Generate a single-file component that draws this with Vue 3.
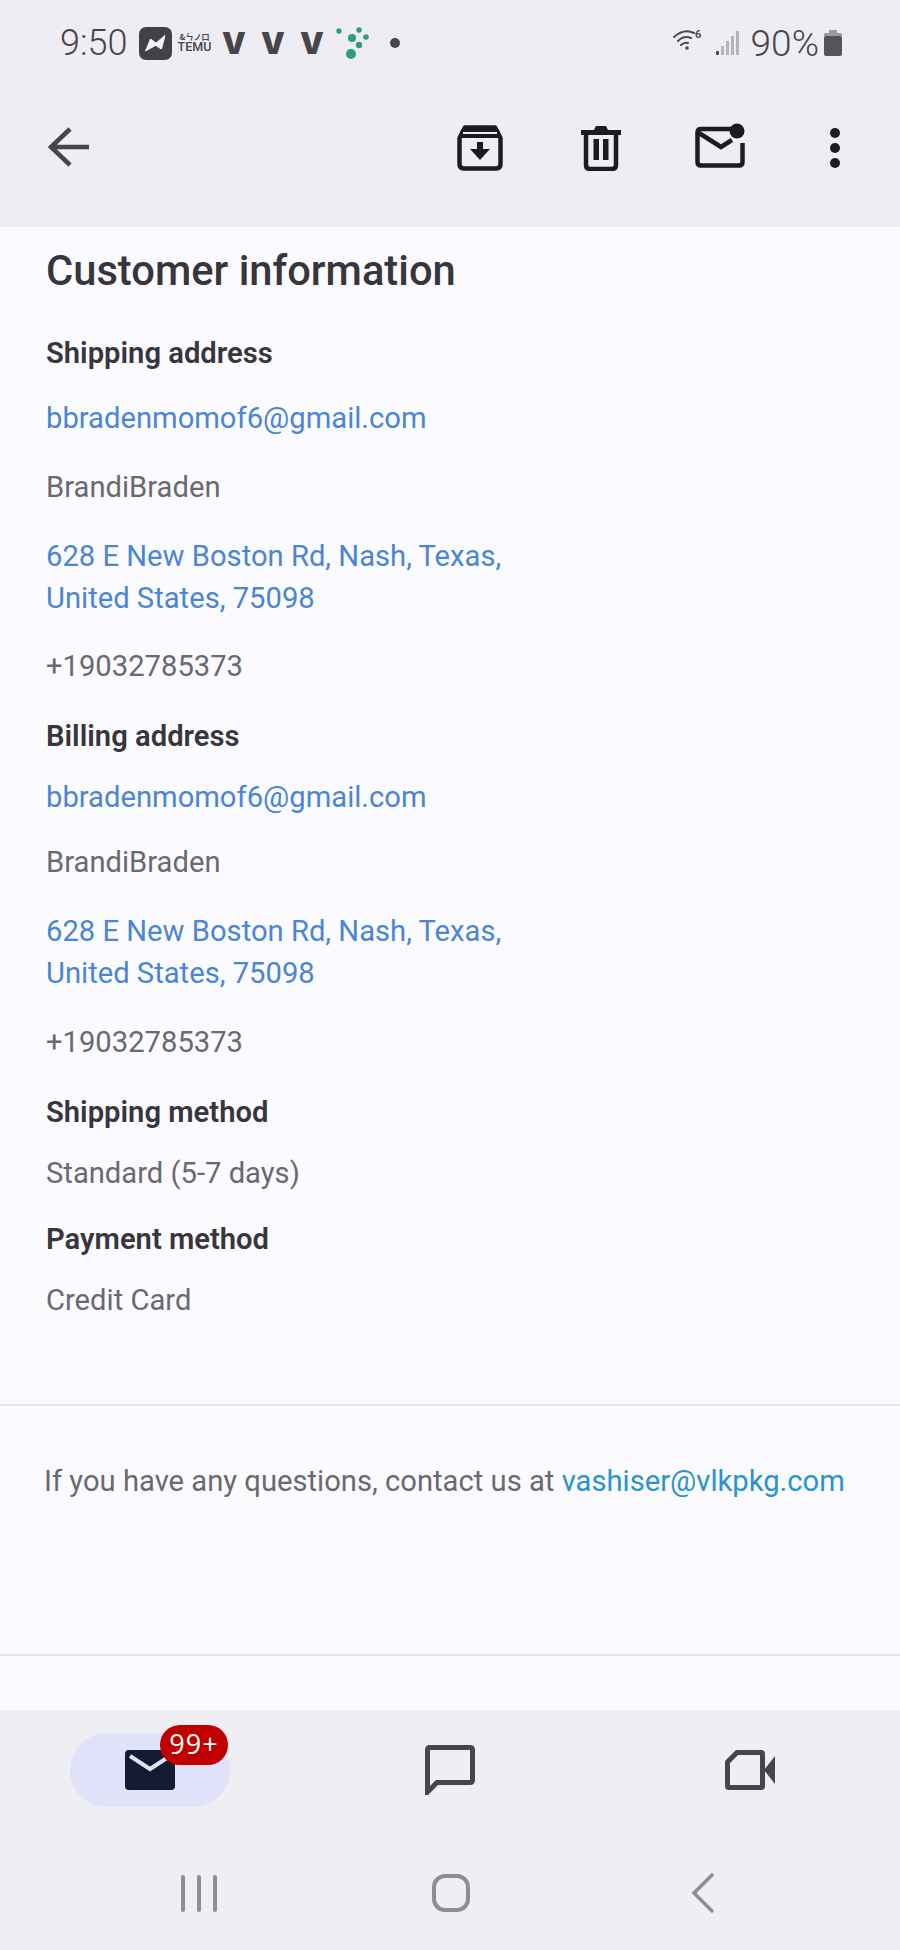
<template>
  <div class="phone">
    <header class="top">
      <div class="status">
        <span class="time">9:50</span>
        <svg class="st-app" viewBox="0 0 33 33">
          <rect width="33" height="33" rx="7" fill="#434147" />
          <path d="M6.500 24 L11.500 12 L17 16 L26 8.500 L22.500 22 L16.500 18.500 Z" fill="#f4f3f7" stroke="#f4f3f7" stroke-width="1" stroke-linejoin="round" />
        </svg>
        <div class="temu">
          <span class="temu-top">&amp;ㄣノ口</span>
          <span class="temu-name">TEMU</span>
        </div>
        <span class="vee" v-for="n in 3" :key="n">V</span>
        <svg class="st-dots" viewBox="0 0 34 34">
          <circle cx="4" cy="5" r="2.700" fill="#2f9c7c" />
          <circle cx="17" cy="12" r="4" fill="#2f9c7c" />
          <circle cx="24" cy="4" r="2.700" fill="#2f9c7c" />
          <circle cx="31" cy="11" r="2.800" fill="#2f9c7c" />
          <circle cx="24" cy="19" r="3.200" fill="#2f9c7c" />
          <circle cx="16" cy="28" r="5" fill="#2f9c7c" />
        </svg>
        <span class="st-dot"></span>
        <span class="spacer"></span>
        <svg class="st-wifi" viewBox="0 0 30 24">
          <path d="M1 9 Q11 0 21 5 M5 13 Q11 7 18 10 M8 17 Q11 14 15 15" fill="none" stroke="#4a484e" stroke-width="2" stroke-linecap="round" />
          <circle cx="14" cy="20" r="1.800" fill="#4a484e" />
          <text x="22" y="10" class="wifi-six">6</text>
        </svg>
        <svg class="st-signal" viewBox="0 0 24 24">
          <rect x="1" y="20" width="3" height="4" rx="1" fill="#48464c" />
          <rect x="6" y="15" width="3" height="9" fill="#b5b4ba" />
          <rect x="11" y="10" width="3" height="14" fill="#b5b4ba" />
          <rect x="16" y="5" width="3" height="19" fill="#b5b4ba" />
          <rect x="21" y="0" width="3" height="24" fill="#b5b4ba" />
        </svg>
        <span class="batt-text">90%</span>
        <svg class="st-batt" viewBox="0 0 18 26">
          <rect x="5" y="0" width="8" height="4" fill="#9b9a9f" />
          <rect x="0" y="3" width="18" height="4" rx="1.500" fill="#9b9a9f" />
          <rect x="0" y="6" width="18" height="20" rx="2" fill="#56545a" />
        </svg>
      </div>
      <div class="actions">
        <svg class="ic-back" viewBox="0 0 42 42">
          <path d="M41 21 H4 M22 3 L3 21 L22 39" fill="none" stroke="#47454b" stroke-width="4.500" />
        </svg>
        <svg class="ic-archive" viewBox="0 0 46 46">
          <path d="M2.500 13 L2.500 39 Q2.500 43.500 7 43.500 H39 Q43.500 43.500 43.500 39 V13 L38 2.500 H8 Z" fill="none" stroke="#1c1b1f" stroke-width="4.500" stroke-linejoin="round" />
          <path d="M3 9 Q3 3 9 3 H37 Q43 3 43 9 V13 H3 Z" fill="#1c1b1f" />
          <path d="M6 7 Q7 7 9 7 H37 Q39 7 40 7 V9 H6 Z" fill="#eeedf3" />
          <path d="M20 17 H26 V24 H33 L23 35 L13 24 H20 Z" fill="#1c1b1f" />
        </svg>
        <svg class="ic-trash" viewBox="0 0 40 46">
          <path d="M0 5 H13 L15 1 H25 L27 5 H40 V10 H0 Z" fill="#1c1b1f" />
          <path d="M5 8 V40 Q5 44 9 44 H31 Q35 44 35 40 V8" fill="none" stroke="#1c1b1f" stroke-width="4.500" />
          <rect x="12.500" y="14" width="5.500" height="21" fill="#1c1b1f" />
          <rect x="22" y="14" width="5.500" height="21" fill="#1c1b1f" />
        </svg>
        <svg class="ic-unread" viewBox="0 0 52 46">
          <path d="M36 6 H6 Q2.500 6 2.500 9.500 V39 Q2.500 42.500 6 42.500 H44 Q47.500 42.500 47.500 39 V20" fill="none" stroke="#1c1b1f" stroke-width="4.500" />
          <path d="M4 10 L26 24 L37 17" fill="none" stroke="#1c1b1f" stroke-width="4.500" />
          <circle cx="42" cy="8" r="7.500" fill="#1c1b1f" />
        </svg>
        <div class="ic-more">
          <span></span>
          <span></span>
          <span></span>
        </div>
      </div>
    </header>

    <main class="body">
      <section class="info">
        <h1>Customer information</h1>
        <div v-for="(block, i) in addresses" :key="block.title" class="addr-block" :class="{ tight: i === 1 }">
          <h2>{{ block.title }}</h2>
          <p class="link email">{{ block.email }}</p>
          <p class="muted name">{{ block.name }}</p>
          <p class="link addr">628 E New Boston Rd, Nash, Texas,<br />United States, 75098</p>
          <p class="muted phone-no">{{ block.phone }}</p>
        </div>
        <h2>Shipping method</h2>
        <p class="muted method">Standard (5-7 days)</p>
        <h2 class="pay">Payment method</h2>
        <p class="muted method">Credit Card</p>
      </section>
      <section class="contact">
        If you have any questions, contact us at <span class="contact-link">vashiser@vlkpkg.com</span>
      </section>
    </main>

    <footer class="bottom">
      <nav class="tabs">
        <div class="tab">
          <div class="pill">
            <svg class="ic-mail" viewBox="0 0 50 40">
              <rect width="50" height="40" rx="4" fill="#141a33" />
              <path d="M5 6 L25 19 L45 6" fill="none" stroke="#dfe2f8" stroke-width="4" />
            </svg>
            <span class="badge">99+</span>
          </div>
        </div>
        <div class="tab">
          <svg class="ic-chat" viewBox="0 0 50 50">
            <path d="M2.500 47 V5 Q2.500 2.500 5 2.500 H45 Q47.500 2.500 47.500 5 V35 Q47.500 37.500 45 37.500 H12 Z" fill="none" stroke="#47454b" stroke-width="5" />
          </svg>
        </div>
        <div class="tab">
          <svg class="ic-video" viewBox="0 0 50 40">
            <path d="M12 2.500 H36 Q37.500 2.500 37.500 4 V36 Q37.500 37.500 36 37.500 H4 Q2.500 37.500 2.500 36 V12 Z" fill="none" stroke="#47454b" stroke-width="5" stroke-linejoin="round" />
            <path d="M39 20 L50 6 V34 Z" fill="#47454b" />
          </svg>
        </div>
      </nav>
      <div class="sysnav">
        <div class="recents">
          <span></span>
          <span></span>
          <span></span>
        </div>
        <div class="home"></div>
        <svg class="sys-back" viewBox="0 0 22 40">
          <path d="M20 2 L2 20 L20 38" fill="none" stroke="#8e8d92" stroke-width="3.500" stroke-linecap="round" />
        </svg>
      </div>
    </footer>
  </div>
</template>

<script setup>
const addresses = [
  {
    title: 'Shipping address',
    email: 'bbradenmomof6@gmail.com',
    name: 'BrandiBraden',
    phone: '+19032785373'
  },
  {
    title: 'Billing address',
    email: 'bbradenmomof6@gmail.com',
    name: 'BrandiBraden',
    phone: '+19032785373'
  }
]
</script>

<style>
html, body {
  margin: 0;
  background: #fbfaff;
}
</style>

<style scoped>
.phone {
  display: flex;
  flex-direction: column;
  width: 900px;
  height: 1950px;
  overflow: hidden;
  font-family: Roboto, "Liberation Sans", sans-serif;
  background: #fbfaff;
}

.top {
  flex: 0 0 227px;
  background: #eeedf3;
}

.status {
  display: flex;
  align-items: center;
  height: 34px;
  padding: 26px 58px 0 60px;
  color: #47454b;
}

.time {
  width: 79px;
  font-size: 36px;
  font-weight: 300;
}

.st-app {
  width: 33px;
  height: 33px;
}

.temu {
  display: flex;
  flex-direction: column;
  align-items: center;
  width: 33px;
  margin: 0 11px 0 6px;
  line-height: 1;
  color: #47454b;
}

.temu-top {
  font-family: "Noto Sans CJK SC", sans-serif;
  font-size: 8px;
  font-weight: 700;
  white-space: nowrap;
}

.temu-name {
  font-size: 12.500px;
  font-weight: 500;
}

.vee {
  width: 39px;
  font-family: Inter, sans-serif;
  font-size: 30px;
  font-weight: 900;
  line-height: 1;
}

.st-dots {
  width: 34px;
  height: 34px;
  margin-left: -4px;
}

.st-dot {
  width: 10px;
  height: 10px;
  margin-left: 21px;
  border-radius: 50%;
  background: #47454b;
}

.spacer {
  flex: 1;
}

.st-wifi {
  width: 30px;
  height: 24px;
  margin-top: -6px;
}

.wifi-six {
  font-size: 11px;
  font-weight: 700;
  fill: #4a484e;
}

.st-signal {
  width: 24px;
  height: 24px;
  margin-left: 12px;
}

.batt-text {
  margin-left: 12px;
  font-size: 37px;
  font-weight: 300;
}

.st-batt {
  width: 18px;
  height: 26px;
  margin-left: 5px;
}

.actions {
  display: flex;
  align-items: center;
  height: 46px;
  margin-top: 65px;
  padding-left: 48px;
}

.ic-back {
  width: 42px;
  height: 42px;
  margin-top: -2px;
}

.ic-archive {
  width: 46px;
  height: 46px;
  margin-left: 367px;
}

.ic-trash {
  width: 40px;
  height: 46px;
  margin-left: 78px;
}

.ic-unread {
  width: 52px;
  height: 46px;
  margin-top: -4px;
  margin-left: 74px;
}

.ic-more {
  display: flex;
  flex-direction: column;
  gap: 5px;
  margin-left: 83px;
}

.ic-more span {
  width: 10px;
  height: 10px;
  border-radius: 50%;
  background: #1c1b1f;
}

.body {
  flex: 1;
}

.info {
  height: 1179px;
  padding: 20px 46px 0;
  border-bottom: 2px solid #e6e5ea;
  box-sizing: border-box;
}

h1 {
  margin: 0;
  font-size: 41.700px;
  line-height: 48px;
  font-weight: 500;
  color: #37363c;
}

h2 {
  margin: 28px 0 0;
  font-size: 29.200px;
  line-height: 42px;
  font-weight: 600;
  color: #37363c;
}

h1 + .addr-block h2 {
  margin-top: 37px;
}

.pay {
  margin-top: 24px;
}

p {
  margin: 0;
  font-size: 29.200px;
  line-height: 42px;
}

.link {
  color: #4a86d4;
}

.muted {
  color: #6a696f;
}

.email {
  margin-top: 23px;
}

.name {
  margin-top: 27px;
}

.addr {
  margin-top: 27px;
}

.phone-no {
  margin-top: 26px;
}

.tight .email {
  margin-top: 19px;
}

.tight .name {
  margin-top: 23px;
}

.tight .phone-no {
  margin-top: 27px;
}

.method {
  margin-top: 19px;
}

.contact {
  height: 250px;
  padding: 54px 0 0 44px;
  box-sizing: border-box;
  border-bottom: 2px solid #e6e5ea;
  font-size: 29.200px;
  line-height: 42px;
  color: #6a696f;
}

.contact-link {
  color: #2a94cc;
}

.bottom {
  flex: 0 0 240px;
  background: #efeef3;
}

.tabs {
  display: grid;
  grid-template-columns: repeat(3, 300px);
  height: 120px;
}

.tab {
  display: flex;
  justify-content: center;
  align-items: center;
}

.pill {
  position: relative;
  display: flex;
  justify-content: center;
  align-items: center;
  width: 160px;
  height: 74px;
  border-radius: 37px;
  background: #dfe2f8;
}

.ic-mail {
  width: 50px;
  height: 40px;
}

.badge {
  position: absolute;
  top: -8px;
  left: 90px;
  width: 68px;
  height: 40px;
  border-radius: 20px;
  background: #c00000;
  color: #fff;
  font-family: "Open Sans", sans-serif;
  font-size: 27px;
  font-weight: 500;
  letter-spacing: 1px;
  line-height: 38px;
  text-align: center;
}

.ic-chat {
  width: 50px;
  height: 50px;
}

.ic-video {
  width: 50px;
  height: 40px;
}

.sysnav {
  display: flex;
  align-items: center;
  height: 40px;
  margin-top: 43px;
  padding-left: 181px;
}

.recents {
  display: flex;
  gap: 12px;
  width: 36px;
}

.recents span {
  width: 4px;
  height: 37px;
  border-radius: 2px;
  background: #8e8d92;
}

.home {
  width: 38px;
  height: 38px;
  margin-left: 215px;
  border: 4px solid #8e8d92;
  border-radius: 13px;
  box-sizing: border-box;
}

.sys-back {
  width: 22px;
  height: 40px;
  margin-left: 222px;
}
</style>
